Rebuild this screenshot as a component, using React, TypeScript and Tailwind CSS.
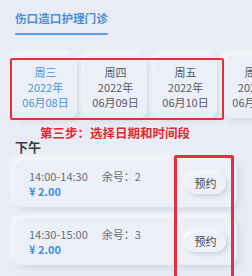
import React from 'react';

const dates = [
    { week: '周三', year: '2022年', day: '06月08日', active: true },
    { week: '周四', year: '2022年', day: '06月09日', active: false },
    { week: '周五', year: '2022年', day: '06月10日', active: false },
    { week: '周六', year: '2022年', day: '06月11日', active: false },
];

const slots = [
    { time: '14:00-14:30', left: 2, price: '¥ 2.00' },
    { time: '14:30-15:00', left: 3, price: '¥ 2.00' },
];

export default function App() {
    return (
        <div className="relative w-[252px] h-[276px] overflow-hidden bg-[#e9ecf5] font-['Noto_Sans_CJK_SC',sans-serif]">
            {/* Header tab */}
            <div className="px-[15px] pt-[10px]">
                <div className="w-fit">
                    <div className="text-[11.6px] leading-[16px] font-semibold text-[#4a8fd4]">伤口造口护理门诊</div>
                    <div className="mt-[7px] h-[2px] rounded-full bg-[#5b9de0]"></div>
                </div>
            </div>

            {/* Date picker */}
            <div className="flex gap-[7px] pl-[14px] mt-[20px]">
                {dates.map((d) => (
                    <div
                        key={d.day}
                        className={`shrink-0 w-[63px] h-[63px] rounded-[8px] bg-[#eceff7] pt-[10px] text-center text-[11px] leading-[15px] shadow-[3px_3px_6px_rgba(170,180,202,0.35),-3px_-3px_6px_rgba(255,255,255,0.75)] ${
                            d.active ? 'text-[#4a96d8]' : 'text-[#555a63]'
                        }`}
                    >
                        <div>{d.week}</div>
                        <div>{d.year}</div>
                        <div>{d.day}</div>
                    </div>
                ))}
            </div>

            {/* Section */}
            <div className="px-[15px] mt-[21px]">
                <div className="text-[13px] leading-[16px] font-bold text-[#3a3d44]">下午</div>
                <div className="mt-[5px] flex flex-col gap-[11px]">
                    {slots.map((s) => (
                        <div
                            key={s.time}
                            className="flex items-center justify-between h-[47px] rounded-[8px] bg-[#eceff7] pl-[14px] pr-[11px] shadow-[3px_3px_6px_rgba(170,180,202,0.35),-3px_-3px_6px_rgba(255,255,255,0.75)]"
                        >
                            <div className="pt-[1px]">
                                <div className="flex gap-[14px] text-[11px] leading-[15px] text-[#6a6e76]">
                                    <span>{s.time}</span>
                                    <span>余号：{s.left}</span>
                                </div>
                                <div className="text-[11px] leading-[15px] font-bold text-[#3d8fe0]">{s.price}</div>
                            </div>
                            <button className="w-[41px] h-[20px] rounded-full bg-[#eef1f8] text-[11px] text-[#454850] shadow-[2px_2px_4px_rgba(160,172,196,0.45),-2px_-2px_4px_rgba(255,255,255,0.85)]">
                                预约
                            </button>
                        </div>
                    ))}
                </div>
            </div>

            {/* Annotations */}
            <div className="absolute left-[10px] top-[58px] w-[214px] h-[62px] border-[2px] border-[#e3313b] rounded-[2px]"></div>
            <div className="absolute left-[40px] top-[125px] text-[12.5px] leading-[16px] font-bold text-[#e3282f]">第三步：选择日期和时间段</div>
            <div className="absolute left-[174px] top-[155px] w-[60px] h-[140px] border-[3px] border-[#e3313b] rounded-[2px]"></div>
        </div>
    );
}
